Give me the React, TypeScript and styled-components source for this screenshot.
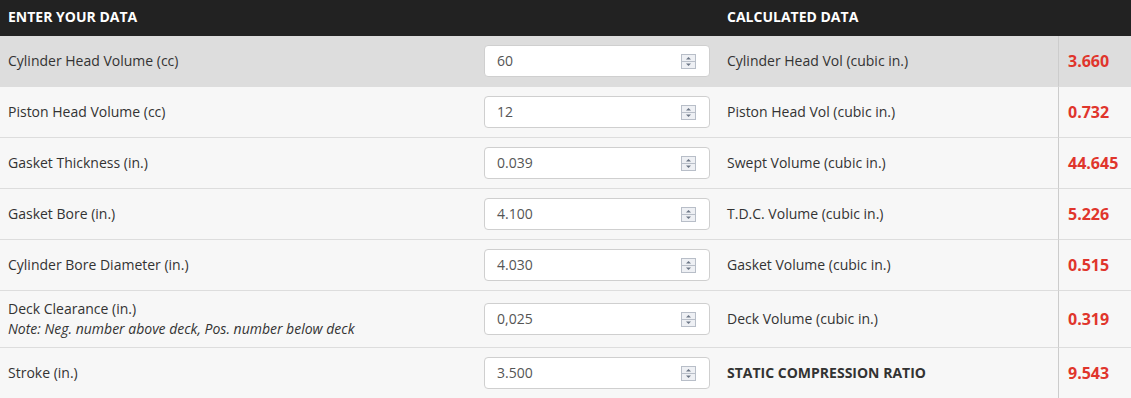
import React from 'react';
import styled, { createGlobalStyle } from 'styled-components';

const GlobalStyle = createGlobalStyle`
  html, body {
    margin: 0;
    padding: 0;
    background: #f7f7f7;
    font-family: 'Open Sans', 'Liberation Sans', sans-serif;
  }
`;

const Table = styled.div`
  width: 1131px;
  display: grid;
  grid-template-columns: 476px 242px 340px 1fr;
`;

const HeadCell = styled.div<{ $pad?: number }>`
  height: 36px;
  background: #222222;
  color: #ffffff;
  font-size: 14px;
  font-weight: 700;
  text-transform: uppercase;
  display: flex;
  align-items: center;
  padding-left: ${(p) => p.$pad ?? 8}px;
  padding-bottom: 3px;
  box-sizing: border-box;
`;

const Cell = styled.div<{ $first?: boolean; $tall?: boolean; $last?: boolean }>`
  min-height: ${(p) => (p.$tall ? 56 : 50)}px;
  background: ${(p) => (p.$first ? '#dddddd' : '#f7f7f7')};
  border-bottom: ${(p) => (p.$last ? 'none' : '1px solid #dddddd')};
  display: flex;
  flex-direction: column;
  justify-content: center;
  box-sizing: content-box;
  color: #333333;
  font-size: 14px;
  line-height: 20px;
`;

const LabelCell = styled(Cell)`
  padding-left: 8px;
`;

const InputCell = styled(Cell)`
  padding-left: 8px;
`;

const CalcCell = styled(Cell)`
  padding-left: 9px;
`;

const ValueCell = styled(Cell)`
  padding-left: 9px;
  border-left: 1px solid #cccccc;
  color: #e0352c;
  font-weight: 700;
  font-size: 16px;
`;

const Note = styled.span`
  font-style: italic;
  font-size: 14px;
`;

const Strong = styled.span`
  font-weight: 700;
  text-transform: uppercase;
`;

const NumberBox = styled.div`
  width: 226px;
  height: 32px;
  box-sizing: border-box;
  background: #ffffff;
  border: 1px solid #cfcfcf;
  border-radius: 4px;
  display: flex;
  align-items: center;
  justify-content: space-between;
  padding: 0 13px 0 12px;
  color: #555555;
  font-size: 14px;
`;

const Spinner = () => (
  <svg width="15" height="15" viewBox="0 0 15 15">
    <rect x="0.5" y="0.5" width="14" height="14" fill="#eef0f4" stroke="#b8bec8" />
    <line x1="1" y1="7.5" x2="14" y2="7.5" stroke="#b8bec8" />
    <path d="M5 5.5 L7.5 3 L10 5.5 Z" fill="#6c7686" />
    <path d="M5 9.5 L7.5 12 L10 9.5 Z" fill="#6c7686" />
  </svg>
);

const rows = [
  { label: 'Cylinder Head Volume (cc)', input: '60', calc: 'Cylinder Head Vol (cubic in.)', value: '3.660' },
  { label: 'Piston Head Volume (cc)', input: '12', calc: 'Piston Head Vol (cubic in.)', value: '0.732' },
  { label: 'Gasket Thickness (in.)', input: '0.039', calc: 'Swept Volume (cubic in.)', value: '44.645' },
  { label: 'Gasket Bore (in.)', input: '4.100', calc: 'T.D.C. Volume (cubic in.)', value: '5.226' },
  { label: 'Cylinder Bore Diameter (in.)', input: '4.030', calc: 'Gasket Volume (cubic in.)', value: '0.515' },
  {
    label: 'Deck Clearance (in.)',
    note: 'Note: Neg. number above deck, Pos. number below deck',
    input: '0,025',
    calc: 'Deck Volume (cubic in.)',
    value: '0.319',
  },
  { label: 'Stroke (in.)', input: '3.500', calc: 'Static Compression Ratio', value: '9.543', strong: true },
];

const App = (): JSX.Element => (
  <>
    <GlobalStyle />
    <Table>
      <HeadCell>Enter your data</HeadCell>
      <HeadCell />
      <HeadCell $pad={9}>Calculated data</HeadCell>
      <HeadCell />
      {rows.map((r, i) => {
        const props = { $first: i === 0, $tall: !!r.note, $last: i === rows.length - 1 };
        return (
          <React.Fragment key={r.label}>
            <LabelCell {...props}>
              <span>{r.label}</span>
              {r.note && <Note>{r.note}</Note>}
            </LabelCell>
            <InputCell {...props}>
              <NumberBox>
                <span>{r.input}</span>
                <Spinner />
              </NumberBox>
            </InputCell>
            <CalcCell {...props}>{r.strong ? <Strong>{r.calc}</Strong> : r.calc}</CalcCell>
            <ValueCell {...props}>{r.value}</ValueCell>
          </React.Fragment>
        );
      })}
    </Table>
  </>
);

export default App;
